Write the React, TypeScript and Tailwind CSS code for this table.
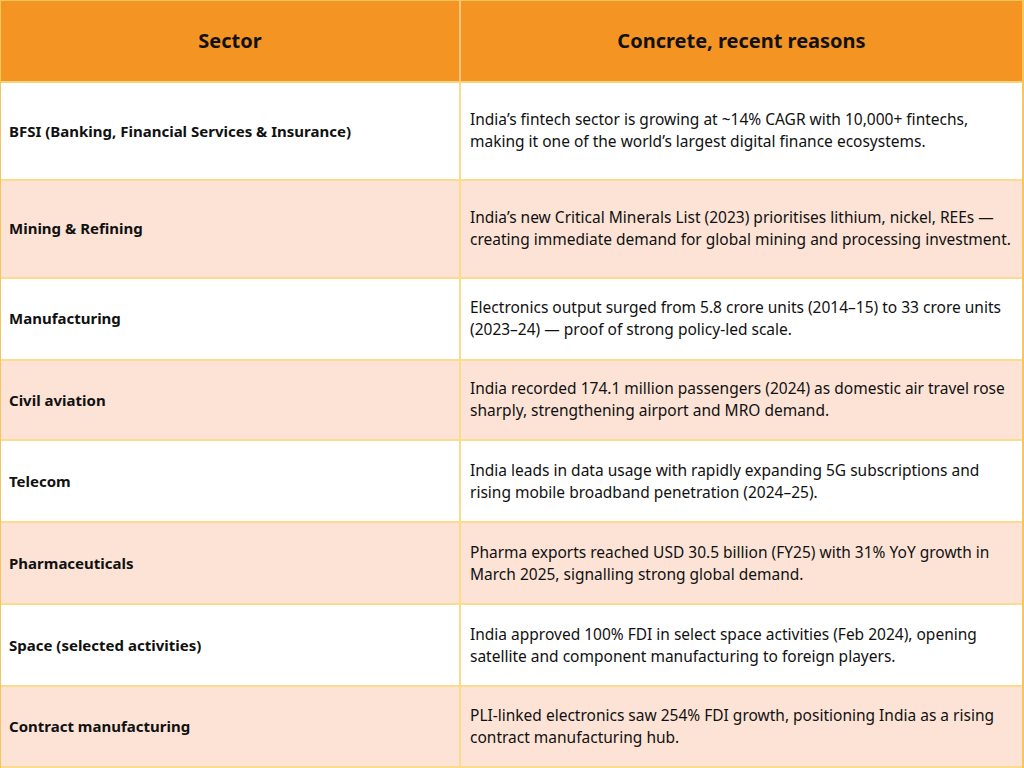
import React from "react";

// reasons are broken into the same two lines as the source graphic
const rows = [
  {
    sector: "BFSI (Banking, Financial Services & Insurance)",
    reason: [
      "India’s fintech sector is growing at ~14% CAGR with 10,000+ fintechs,",
      "making it one of the world’s largest digital finance ecosystems.",
    ],
    h: "h-[98px]",
  },
  {
    sector: "Mining & Refining",
    reason: [
      "India’s new Critical Minerals List (2023) prioritises lithium, nickel, REEs —",
      "creating immediate demand for global mining and processing investment.",
    ],
    h: "h-[98px]",
  },
  {
    sector: "Manufacturing",
    reason: [
      "Electronics output surged from 5.8 crore units (2014–15) to 33 crore units",
      "(2023–24) — proof of strong policy-led scale.",
    ],
    h: "h-[82px]",
  },
  {
    sector: "Civil aviation",
    reason: [
      "India recorded 174.1 million passengers (2024) as domestic air travel rose",
      "sharply, strengthening airport and MRO demand.",
    ],
    h: "h-[81px]",
  },
  {
    sector: "Telecom",
    reason: [
      "India leads in data usage with rapidly expanding 5G subscriptions and",
      "rising mobile broadband penetration (2024–25).",
    ],
    h: "h-[82px]",
  },
  {
    sector: "Pharmaceuticals",
    reason: [
      "Pharma exports reached USD 30.5 billion (FY25) with 31% YoY growth in",
      "March 2025, signalling strong global demand.",
    ],
    h: "h-[82px]",
  },
  {
    sector: "Space (selected activities)",
    reason: [
      "India approved 100% FDI in select space activities (Feb 2024), opening",
      "satellite and component manufacturing to foreign players.",
    ],
    h: "h-[82px]",
  },
  {
    sector: "Contract manufacturing",
    reason: [
      "PLI-linked electronics saw 254% FDI growth, positioning India as a rising",
      "contract manufacturing hub.",
    ],
    h: "h-[81px]",
  },
];

export default function App() {
  return (
    <div className="w-[1024px] h-[768px] bg-white text-[#111] font-['Noto_Sans',sans-serif]">
      <div className="border-l border-r-2 border-t border-[#f6c65a] h-full flex flex-col">
        {/* header */}
        <div className="grid grid-cols-[460px_1fr] h-[82px] bg-[#f39423] border-b-2 border-[#fbd27c]">
          <div className="flex items-center justify-center border-r-2 border-[#f8c67e] text-[20px] font-bold">
            Sector
          </div>
          <div className="flex items-center justify-center text-[20px] font-bold">
            Concrete, recent reasons
          </div>
        </div>
        {rows.map((r, i) => (
          <div
            key={r.sector}
            className={`grid grid-cols-[460px_1fr] ${r.h} border-b-2 border-[#fbdc8e] ${
              i % 2 === 0 ? "bg-white" : "bg-[#fce3d6]"
            }`}
          >
            <div className="flex items-center pl-2 border-r-2 border-[#fbdc8e] text-[15px] font-bold">
              {r.sector}
            </div>
            <div className="flex flex-col justify-center pl-[9px] text-[15.5px] leading-[22px] whitespace-nowrap -mt-px">
              {r.reason.map((line) => (
                <span key={line}>{line}</span>
              ))}
            </div>
          </div>
        ))}
      </div>
    </div>
  );
}
